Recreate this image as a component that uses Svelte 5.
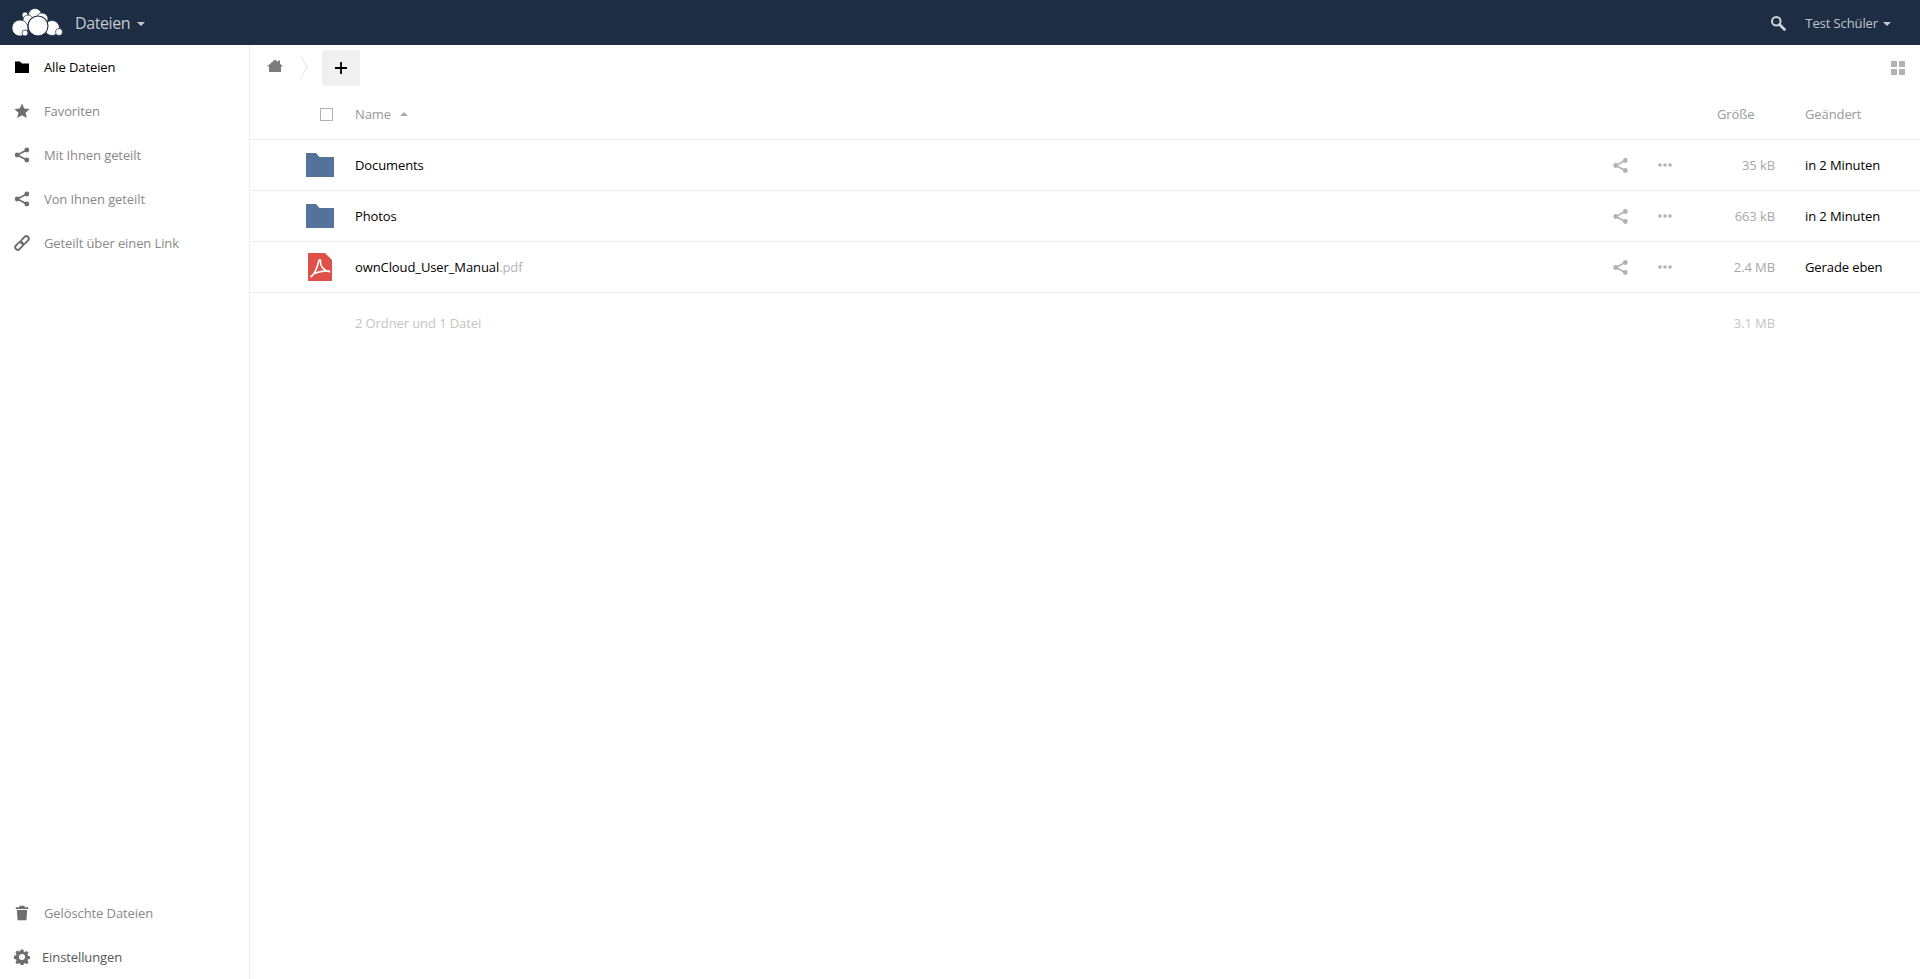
<script lang="ts">
  const navTop = [
    { label: "Alle Dateien", icon: "folder", active: true },
    { label: "Favoriten", icon: "star" },
    { label: "Mit Ihnen geteilt", icon: "share" },
    { label: "Von Ihnen geteilt", icon: "share" },
    { label: "Geteilt über einen Link", icon: "link" },
  ];

  const files = [
    { name: "Documents", ext: "", type: "dir", size: "35 kB", date: "in 2 Minuten" },
    { name: "Photos", ext: "", type: "dir", size: "663 kB", date: "in 2 Minuten" },
    { name: "ownCloud_User_Manual", ext: ".pdf", type: "pdf", size: "2.4 MB", date: "Gerade eben" },
  ];
</script>

{#snippet navIcon(name)}
  <svg class="nav-icon" viewBox="0 0 16 16" width="16" height="16">
    {#if name === "folder"}
      <path d="M1 2.500h5l2 2h7v9.500H1z" />
    {:else if name === "star"}
      <path d="M8 .6l2.200 5 5.400.5-4.100 3.600 1.300 5.400L8 12.300l-4.800 2.800 1.300-5.400L.4 6.100l5.400-.5z" />
    {:else if name === "share"}
      <circle cx="12.800" cy="3" r="2.400" />
      <circle cx="3.200" cy="8" r="2.400" />
      <circle cx="12.800" cy="13" r="2.400" />
      <path d="M12.800 3L3.200 8l9.600 5" fill="none" stroke="currentColor" stroke-width="1.600" />
    {:else if name === "link"}
      <g fill="none" stroke="currentColor" stroke-width="1.900" transform="rotate(-45 8 8)">
        <rect x="-0.500" y="5.500" width="9" height="5" rx="2.500" />
        <rect x="7.500" y="5.500" width="9" height="5" rx="2.500" />
      </g>
    {:else if name === "trash"}
      <path d="M1.800 2.200h3.600V.8h5.200v1.400h3.600v1.900H1.800zM2.800 5.100h10.400l-.8 10.100H3.600z" />
    {:else if name === "gear"}
      <path fill-rule="evenodd" d="M6.700.5h2.600l.4 2 1.300.6 1.800-1.100 1.800 1.800-1.100 1.800.6 1.300 2 .4v2.600l-2 .4-.6 1.300 1.100 1.800-1.800 1.800-1.800-1.100-1.300.6-.4 2H6.700l-.4-2-1.300-.6-1.800 1.100-1.800-1.800 1.100-1.800-.6-1.300-2-.4V6.700l2-.4.6-1.300L1.400 3.200l1.800-1.800 1.800 1.100 1.300-.6zM8 5a3 3 0 1 0 0 6 3 3 0 0 0 0-6z" />
    {/if}
  </svg>
{/snippet}

<div class="page">
  <header class="topbar">
    <div class="brand">
      <svg class="logo" viewBox="0 0 52 30" width="52" height="30">
        <g fill="#fff" stroke="#1d2d44" stroke-width="0.7">
          <circle cx="24" cy="7" r="6.500" />
          <circle cx="31" cy="11" r="6" />
          <circle cx="14" cy="7" r="3" />
          <circle cx="17" cy="12" r="5" />
          <circle cx="9" cy="20" r="8" />
          <circle cx="41" cy="20" r="7.500" />
          <circle cx="48" cy="24" r="3.500" />
          <circle cx="14" cy="25" r="3" />
          <circle cx="27" cy="18" r="10" stroke-width="1.100" />
        </g>
      </svg>
      <span class="app-name">Dateien</span>
      <span class="caret"></span>
    </div>
    <div class="top-right">
      <svg class="search" viewBox="0 0 16 16" width="16" height="16">
        <circle cx="6.300" cy="6.300" r="4.300" fill="none" stroke="#d2d5da" stroke-width="2" />
        <path d="M9.500 9.500l5 5" stroke="#d2d5da" stroke-width="2.600" stroke-linecap="round" />
      </svg>
      <span class="user">Test Schüler</span>
      <span class="caret small"></span>
    </div>
  </header>

  <div class="body">
    <nav class="sidebar">
      <ul>
        {#each navTop as item}
          <li class:active={item.active}>
            {@render navIcon(item.icon)}
            <span>{item.label}</span>
          </li>
        {/each}
      </ul>
      <ul>
        <li>
          {@render navIcon("trash")}
          <span>Gelöschte Dateien</span>
        </li>
        <li class="settings">
          {@render navIcon("gear")}
          <span>Einstellungen</span>
        </li>
      </ul>
    </nav>

    <main class="content">
      <div class="controls">
        <svg class="home" viewBox="0 0 16 14" width="16" height="14">
          <path d="M8 .5l3 2.600V1.500h2v3.300l3 2.700h-2V13H2V7.500H0z" fill="#7c7c7c" />
        </svg>
        <svg class="crumb" viewBox="0 0 8 24" width="8" height="24">
          <path d="M.5 .5L7 12 .5 23.500" fill="none" stroke="#e2e2e2" />
        </svg>
        <button class="new-btn" aria-label="Neu">
          <svg viewBox="0 0 14 14" width="14" height="14">
            <path d="M7 1v12M1 7h12" stroke="#000" stroke-width="1.800" />
          </svg>
        </button>
        <svg class="grid-view" viewBox="0 0 14 14" width="14" height="14">
          <path d="M0 0h6v6H0zM8 0h6v6H8zM0 8h6v6H0zM8 8h6v6H8z" fill="#b2b2b2" />
        </svg>
      </div>

      <div class="row head">
        <span class="check"></span>
        <span class="name">Name <i class="sort"></i></span>
        <span class="size-head">Größe</span>
        <span class="date-head">Geändert</span>
      </div>

      {#each files as file}
        <div class="row file">
          {#if file.type === "dir"}
            <svg class="file-icon" viewBox="0 0 28 24" width="28" height="24">
              <path d="M0 0h10l3.500 4H28v20H0z" fill="#55739a" />
            </svg>
          {:else}
            <svg class="file-icon" viewBox="0 0 28 28" width="28" height="28">
              <path d="M2 0h17l7 7v21H2z" fill="#df5049" />
              <path d="M4.500 24C8 22 11 15 12.500 9c.5-3 2.500-3 2-.2C14 13 18 18 24 19M8.500 20.500c4-2 10-3 15.500-2.500" fill="none" stroke="#fff" stroke-width="1.600" />
            </svg>
          {/if}
          <span class="name file-name">{file.name}<span class="ext">{file.ext}</span></span>
          <svg class="action share-action" viewBox="0.500 0.500 15 15" width="15" height="15">
            <g fill="#b2b2b2">
              <circle cx="12.800" cy="3" r="2.400" />
              <circle cx="3.200" cy="8" r="2.400" />
              <circle cx="12.800" cy="13" r="2.400" />
            </g>
            <path d="M12.800 3L3.200 8l9.600 5" fill="none" stroke="#b2b2b2" stroke-width="1.600" />
          </svg>
          <svg class="action dots" viewBox="0 0 14 4" width="14" height="4">
            <g fill="#b2b2b2">
              <circle cx="2" cy="2" r="1.800" />
              <circle cx="7" cy="2" r="1.800" />
              <circle cx="12" cy="2" r="1.800" />
            </g>
          </svg>
          <span class="size">{file.size}</span>
          <span class="date">{file.date}</span>
        </div>
      {/each}

      <div class="row summary">
        <span class="name">2 Ordner und 1 Datei</span>
        <span class="size">3.1 MB</span>
      </div>
    </main>
  </div>
</div>

<style>
  :global(body) {
    margin: 0;
    background: #fff;
    font-family: "Open Sans", "Liberation Sans", sans-serif;
    font-size: 13px;
    letter-spacing: -0.1px;
    color: #000;
  }

  .page {
    height: 979px;
    display: flex;
    flex-direction: column;
    overflow: hidden;
  }

  .topbar {
    height: 45px;
    flex: none;
    background: #1d2d44;
    display: flex;
    align-items: center;
    justify-content: space-between;
  }

  .brand {
    display: flex;
    align-items: center;
    padding-left: 11px;
  }

  .logo {
    margin-right: 12px;
  }

  .app-name {
    font-size: 16px;
    letter-spacing: -0.4px;
    color: #c4cad1;
  }

  .caret {
    width: 0;
    height: 0;
    margin: 2px 0 0 7px;
    border-left: 4px solid transparent;
    border-right: 4px solid transparent;
    border-top: 4px solid #c4cad1;
  }

  .top-right {
    display: flex;
    align-items: center;
    padding-right: 29px;
  }

  .search {
    margin-right: 19px;
  }

  .user {
    color: #c0c5cb;
    font-size: 13px;
  }

  .caret.small {
    margin-left: 5px;
  }

  .body {
    flex: 1;
    display: flex;
    min-height: 0;
  }

  .sidebar {
    width: 249px;
    flex: none;
    border-right: 1px solid #eee;
    display: flex;
    flex-direction: column;
    justify-content: space-between;
  }

  .sidebar ul {
    list-style: none;
    margin: 0;
    padding: 0;
  }

  .sidebar li {
    height: 44px;
    display: flex;
    align-items: center;
    padding-left: 14px;
    color: #888;
  }

  .sidebar li span {
    margin-left: 14px;
  }

  .sidebar li.active {
    color: #000;
  }

  .sidebar li.settings {
    color: #555;
  }

  .sidebar li.settings span {
    margin-left: 12px;
  }

  .nav-icon {
    fill: #6e6e6e;
    color: #6e6e6e;
    flex: none;
  }

  .active .nav-icon {
    fill: #000;
    color: #000;
  }

  .content {
    flex: 1;
    min-width: 0;
  }

  .controls {
    height: 46px;
    display: flex;
    align-items: center;
    padding: 0 15px 0 17px;
  }

  .home {
    margin-bottom: 4px;
  }

  .crumb {
    margin: 0 0 3px 17px;
  }

  .new-btn {
    width: 38px;
    height: 36px;
    margin: 0 0 0 14px;
    padding: 0;
    border: 0;
    border-radius: 3px;
    background: #f0f0f0;
    display: flex;
    align-items: center;
    justify-content: center;
  }

  .grid-view {
    margin-left: auto;
  }

  .row {
    display: flex;
    align-items: center;
    border-bottom: 1px solid #eee;
    padding-right: 15px;
    position: relative;
  }

  .head {
    height: 46px;
    padding-bottom: 2px;
    color: #999;
    padding-left: 70px;
  }

  .check {
    width: 11px;
    height: 11px;
    border: 1px solid #b2b2b2;
    flex: none;
  }

  .head .name {
    margin-left: 22px;
    flex: 1;
    display: flex;
    align-items: center;
    gap: 9px;
  }

  .sort {
    width: 0;
    height: 0;
    border-left: 4px solid transparent;
    border-right: 4px solid transparent;
    border-bottom: 4px solid #aaa;
  }

  .size-head {
    width: 88px;
  }

  .date-head {
    width: 96px;
    margin-right: 4px;
    box-sizing: border-box;
  }

  .file {
    height: 50px;
  }

  .file-icon {
    margin-left: 56px;
    flex: none;
  }

  .file-name {
    margin-left: 21px;
    flex: 1;
  }

  .ext {
    color: #b3b3b3;
  }

  .action {
    flex: none;
  }

  .dots {
    margin-left: 30px;
  }

  .size {
    width: 103px;
    text-align: right;
    flex: none;
    color: #a8a8a8;
  }

  .date {
    width: 100px;
    margin-left: 30px;
    flex: none;
    white-space: nowrap;
  }

  .summary {
    height: 50px;
    border-bottom: 0;
    color: #c4c4c4;
    padding-top: 5px;
    padding-right: 145px;
    padding-left: 105px;
  }

  .summary .name {
    flex: 1;
  }

  .summary .size {
    color: #c4c4c4;
  }
</style>
